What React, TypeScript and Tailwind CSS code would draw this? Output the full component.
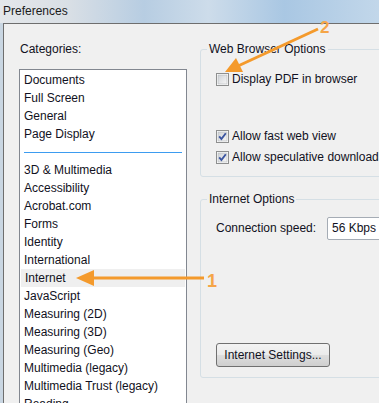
const categorias = [
  "Documents",
  "Full Screen",
  "General",
  "Page Display",
  "---",
  "3D & Multimedia",
  "Accessibility",
  "Acrobat.com",
  "Forms",
  "Identity",
  "International",
  "Internet",
  "JavaScript",
  "Measuring (2D)",
  "Measuring (3D)",
  "Measuring (Geo)",
  "Multimedia (legacy)",
  "Multimedia Trust (legacy)",
  "Reading"
];

function Check({ checked }: { checked?: boolean }) {
  return (
    <svg width="13" height="13" viewBox="0 0 13 13" className="shrink-0">
      <defs>
        <linearGradient id={checked ? "cbOn" : "cbOff"} x1="0" y1="0" x2="1" y2="1">
          <stop offset="0" stopColor="#cfd2d6" />
          <stop offset="1" stopColor="#f7f7f7" />
        </linearGradient>
      </defs>
      <rect x="0.5" y="0.5" width="12" height="12" fill="#fff" stroke="#8e8f8f" />
      <rect x="2" y="2" width="9" height="9" fill={`url(#${checked ? "cbOn" : "cbOff"})`} stroke="#b4b8bd" strokeWidth="0.6" />
      {checked && <path d="M3.2 6.4 L5.4 9 L9.8 3.2" fill="none" stroke="#3b55a0" strokeWidth="1.9" />}
    </svg>
  );
}

export default function App() {
  return (
    <div
      className="relative h-[403px] w-[379px] overflow-hidden bg-[#c9d6e2] text-[12px] leading-[15px] text-[#111122]"
      style={{ fontFamily: '"Liberation Sans", Arial, sans-serif' }}
    >
      {/* Barra de título (aero borrosa) */}
      <div className="flex h-[23px] items-center bg-[linear-gradient(90deg,#e4e7ea_0%,#d9dfe5_18%,#b7cde2_38%,#cddcea_55%,#a9c7e3_75%,#c2d7ea_100%)] pl-[3px] text-[#1b1b1b]">
        Preferences
      </div>

      {/* Cuerpo del diálogo */}
      <div className="ml-[3px] flex h-[380px] overflow-hidden border-l border-t border-[#6e6e6e] bg-[#f0f0f0] pt-[18px]">
        {/* Categorías */}
        <div className="w-[183px] shrink-0 pl-[15px]">
          <p className="ml-[1px]">Categories:</p>
          <div className="mt-[12px] h-[340px] w-[168px] overflow-hidden border border-[#828790] bg-white pt-[1px]">
            {categorias.map((c) =>
              c === "---" ? (
                <div key={c} className="flex h-[18px] items-center px-[4px]">
                  <div className="h-px w-full bg-[#3d9cf0]" />
                </div>
              ) : (
                <div
                  key={c}
                  className={`flex h-[18px] items-center pl-[4px] ${c === "Internet" ? "mx-[1px] bg-[#efefef] pl-[3px]" : ""}`}
                >
                  {c}
                </div>
              )
            )}
          </div>
        </div>

        {/* Opciones */}
        <div className="ml-[13px] w-[220px] shrink-0">
          <fieldset className="rounded-[3px] border border-[#d5dfe5] pb-[11px]">
            <legend className="ml-[6px] px-[2px]">Web Browser Options</legend>
            <div className="pl-[15px]">
              <label className="mt-[15px] flex h-[15px] items-center gap-[2px]">
                <Check />
                <span className="ml-[1px]">Display PDF in browser</span>
              </label>
              <label className="mt-[42px] flex h-[15px] items-center gap-[2px]">
                <Check checked />
                <span className="ml-[1px]">Allow fast web view</span>
              </label>
              <label className="mt-[6px] flex h-[15px] items-center gap-[2px]">
                <Check checked />
                <span className="ml-[1px] whitespace-nowrap">Allow speculative downloading in the background</span>
              </label>
            </div>
          </fieldset>

          <fieldset className="mt-[15px] rounded-[3px] border border-[#d5dfe5] pb-[10px]">
            <legend className="ml-[6px] px-[2px]">Internet Options</legend>
            <div className="pl-[15px]">
              <div className="mt-[10px] flex h-[23px] items-center">
                <span className="w-[111px] shrink-0">Connection speed:</span>
                <div className="flex h-[23px] w-[120px] shrink-0 items-center rounded-[2px] border border-[#a5acb5] bg-white pl-[4px]">
                  56 Kbps
                </div>
              </div>
              <button className="mt-[103px] flex h-[24px] w-[114px] items-center justify-center rounded-[3px] border border-[#707070] bg-[linear-gradient(180deg,#f3f3f3_0%,#ebebeb_48%,#dddddd_52%,#cfcfcf_100%)] text-[#111122]">
                Internet Settings...
              </button>
            </div>
          </fieldset>
        </div>
      </div>

      {/* Flechas de anotación */}
      <svg className="pointer-events-none absolute left-0 top-0" width="379" height="403" viewBox="0 0 379 403">
        <g fill="#f49a2c" stroke="#f49a2c">
          <line x1="204" y1="278" x2="90" y2="278" strokeWidth="3" />
          <polygon points="76,278 94,270 94,286" stroke="none" />
          <line x1="318" y1="29" x2="238" y2="66" strokeWidth="3" />
          <polygon points="225,72 243,72 236,58" stroke="none" />
        </g>
        <text x="207" y="287" fontSize="18" fontWeight="700" fill="#f5a548" fontFamily="Liberation Sans, Arial, sans-serif">
          1
        </text>
        <text x="320" y="33" fontSize="17" fontWeight="700" fill="#f5a548" fontFamily="Liberation Sans, Arial, sans-serif">
          2
        </text>
      </svg>
    </div>
  );
}
